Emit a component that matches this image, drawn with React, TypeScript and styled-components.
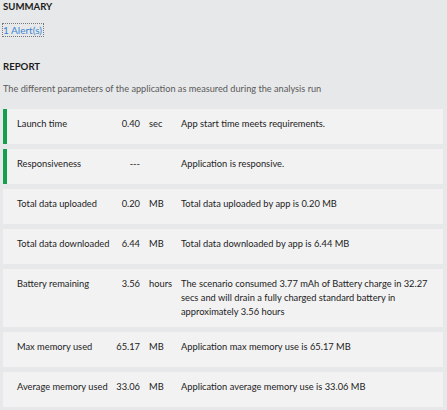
import React from "react";
import styled, { createGlobalStyle } from "styled-components";

const Global = createGlobalStyle`
  html, body { margin: 0; padding: 0; background: #e7e8e9; }
  body { font-family: Lato, "Open Sans", sans-serif; color: #222; }
`;

const Page = styled.div`
  padding: 0 4px 0 3px;
  width: 447px;
  box-sizing: border-box;
`;

const Heading = styled.div<{ $mt?: number }>`
  font-size: 9.6px;
  font-weight: 700;
  line-height: 13px;
  color: #1b1b1b;
  margin-top: ${(p) => p.$mt ?? 0}px;
`;

const LinkRow = styled.div`
  margin-top: 11px;
  line-height: 13px;
  font-size: 10px;
`;

const AlertLink = styled.a`
  color: #3b86d4;
  text-decoration: none;
  outline: 1px dotted #777;
  outline-offset: 0;
  padding: 0 1px 0 0;
  cursor: pointer;
`;

const Description = styled.div`
  margin-top: 9px;
  margin-bottom: 14px;
  font-size: 9.2px;
  line-height: 13px;
  color: #5a5a5a;
`;

const List = styled.div`
  display: flex;
  flex-direction: column;
  gap: 5px;
`;

const Card = styled.div<{ $ok?: boolean }>`
  display: grid;
  grid-template-columns: 96px 27px 41px 1fr;
  align-items: center;
  min-height: 35px;
  box-sizing: border-box;
  width: 440px;
  padding: 8px 12px 8px 10px;
  background: #f2f2f2;
  border-left: 4px solid ${(p) => (p.$ok ? "#14a04a" : "transparent")};
  font-size: 9.3px;
  line-height: 14px;
  color: #222;
`;

const Label = styled.div`
  align-self: start;
  white-space: nowrap;
`;

const Value = styled.div`
  align-self: start;
  text-align: right;
  white-space: nowrap;
`;

const Unit = styled.div`
  align-self: start;
  padding-left: 9px;
  white-space: nowrap;
`;

const Detail = styled.div`
  align-self: start;
`;

type Row = {
  label: string;
  value: string;
  unit: string;
  detail: string;
  ok?: boolean;
};

const rows: Row[] = [
  { label: "Launch time", value: "0.40", unit: "sec", detail: "App start time meets requirements.", ok: true },
  { label: "Responsiveness", value: "---", unit: "", detail: "Application is responsive.", ok: true },
  { label: "Total data uploaded", value: "0.20", unit: "MB", detail: "Total data uploaded by app is 0.20 MB" },
  { label: "Total data downloaded", value: "6.44", unit: "MB", detail: "Total data downloaded by app is 6.44 MB" },
  {
    label: "Battery remaining",
    value: "3.56",
    unit: "hours",
    detail:
      "The scenario consumed 3.77 mAh of Battery charge in 32.27 secs and will drain a fully charged standard battery in approximately 3.56 hours",
  },
  { label: "Max memory used", value: "65.17", unit: "MB", detail: "Application max memory use is 65.17 MB" },
  { label: "Average memory used", value: "33.06", unit: "MB", detail: "Application average memory use is 33.06 MB" },
];

export default function App() {
  return (
    <Page>
      <Global />
      <Heading>SUMMARY</Heading>
      <LinkRow>
        <AlertLink>1 Alert(s)</AlertLink>
      </LinkRow>
      <Heading $mt={23}>REPORT</Heading>
      <Description>The different parameters of the application as measured during the analysis run</Description>
      <List>
        {rows.map((r) => (
          <Card key={r.label} $ok={r.ok}>
            <Label>{r.label}</Label>
            <Value>{r.value}</Value>
            <Unit>{r.unit}</Unit>
            <Detail>{r.detail}</Detail>
          </Card>
        ))}
      </List>
    </Page>
  );
}
